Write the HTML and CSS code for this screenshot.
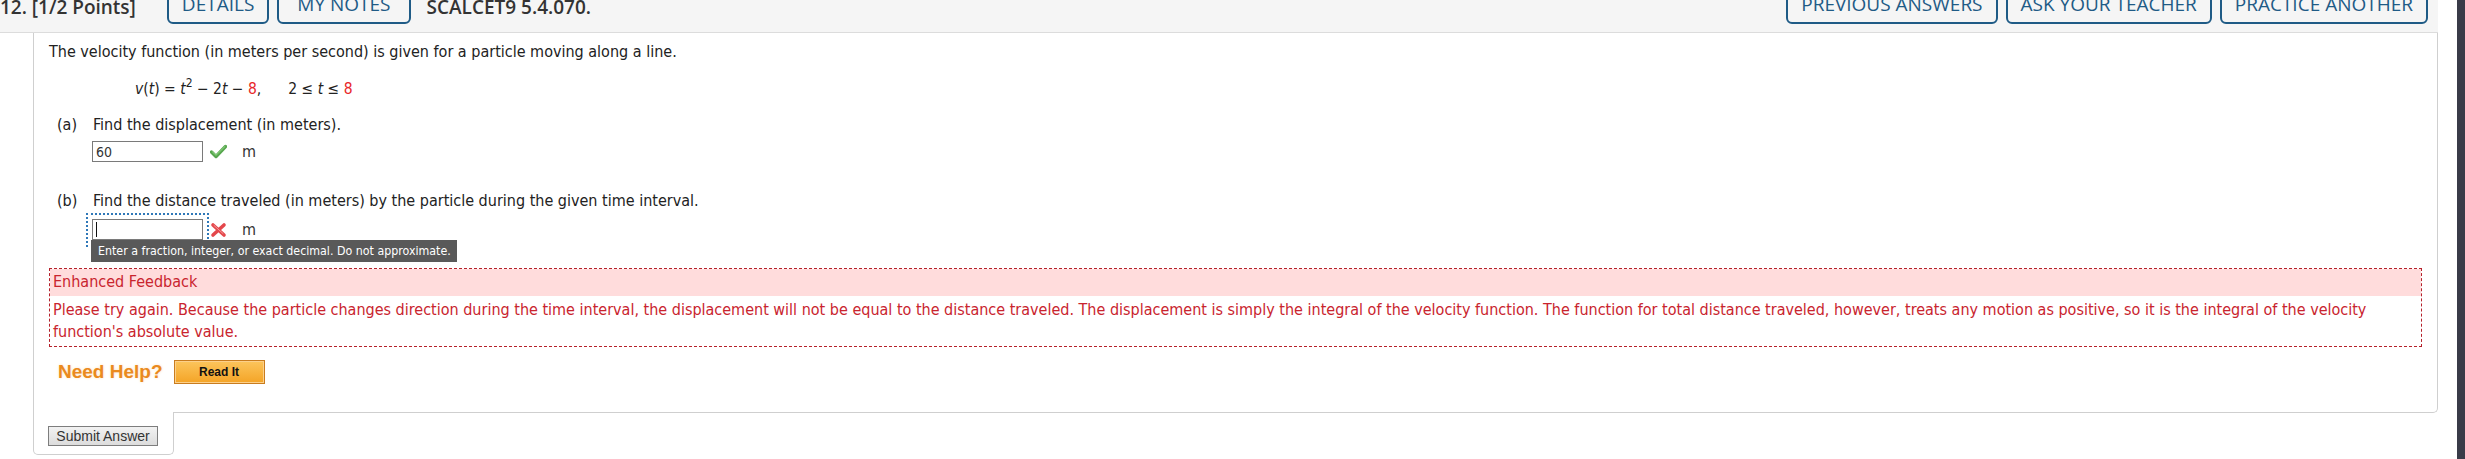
FILE: index.html
```html
<!DOCTYPE html>
<html lang="en">
<head>
  <meta charset="UTF-8" />
  <title>SCALCET9 5.4.070.</title>
  <link rel="stylesheet" href="styles.css">
</head>
<body>

  <div class="screen">
    <div class="page">

      <div class="q-header">
        <span class="q-num">12. [1/2 Points]</span>
        <a class="hbtn">DETAILS</a>
        <a class="hbtn notes">MY NOTES</a>
        <span class="q-code">SCALCET9 5.4.070.</span>
        <span class="spacer"></span>
        <a class="hbtn">PREVIOUS ANSWERS</a>
        <a class="hbtn">ASK YOUR TEACHER</a>
        <a class="hbtn">PRACTICE ANOTHER</a>
      </div>

      <div class="q-body">
        <p class="intro">The velocity function (in meters per second) is given for a particle moving along a line.</p>
        <p class="eq"><i>v</i>(<i>t</i>) = <i>t</i><sup>2</sup> &minus; 2<i>t</i> &minus; <span class="red">8</span>,<span class="sp"></span>2 &le; <i>t</i> &le; <span class="red">8</span></p>

        <div class="part">
          <p class="part-q"><span class="label">(a)</span>Find the displacement (in meters).</p>
          <div class="answer">
            <span class="box"><input class="field" type="text" value="60"></span>
            <svg class="mark" width="17" height="15" viewBox="0 0 17 15">
              <path d="M1.5 8 L6 12.5 L15.5 2.5" fill="none" stroke="#57a64e" stroke-width="3.4" stroke-linecap="round" stroke-linejoin="round"/>
              <path d="M2.5 8 L6 11.3 L15 2.5" fill="none" stroke="#92d886" stroke-width="1" stroke-linecap="round"/>
            </svg>
            <span class="unit">m</span>
          </div>
        </div>

        <div class="part part-b">
          <p class="part-q"><span class="label">(b)</span>Find the distance traveled (in meters) by the particle during the given time interval.</p>
          <div class="answer">
            <span class="box focus"><input class="field" type="text" value=""><span class="caret"></span></span>
            <svg class="mark" width="17" height="16" viewBox="0 0 17 16">
              <path d="M3 3 L14 13 M14 3 L3 13" fill="none" stroke="#e4474b" stroke-width="3.6" stroke-linecap="round"/>
              <path d="M4 3.5 L13 11.5" fill="none" stroke="#f39a9a" stroke-width="1" stroke-linecap="round"/>
            </svg>
            <span class="unit">m</span>
            <div class="tip">Enter a fraction, integer, or exact decimal. Do not approximate.</div>
          </div>
        </div>

        <div class="feedback">
          <div class="fb-head">Enhanced Feedback</div>
          <div class="fb-body">Please try again. Because the particle changes direction during the time interval, the displacement will not be equal to the distance traveled. The displacement is simply the integral of the velocity function. The function for total distance traveled, however, treats any motion as positive, so it is the integral of the velocity function's absolute value.</div>
        </div>

        <div class="help">
          <span class="help-text">Need Help?</span>
          <button class="read-it">Read It</button>
        </div>
      </div>

      <div class="submit-tab">
        <button class="submit">Submit Answer</button>
      </div>

    </div>
    <div class="scrollbar"></div>
  </div>

</body>
</html>
```

FILE: styles.css
```css
* {
  margin: 0;
  padding: 0;
  box-sizing: border-box;
}
body {
  background: #fff;
  font-family: "DejaVu Sans Condensed", "DejaVu Sans", sans-serif;
  font-size: 16px;
  color: #222;
  height: 459px;
  overflow: hidden;
}
.screen {
  display: flex;
  height: 459px;
}
.page {
  flex: 1;
  padding-right: 19px;
}
.scrollbar {
  width: 8px;
  background: #393b48;
}

/* header strip, scrolled so its top is cut */
.q-header {
  height: 33px;
  background: #f5f5f5;
  border-bottom: 1px solid #dcdcdc;
  display: flex;
  align-items: flex-end;
  padding-bottom: 8px;
  overflow: hidden;
  font-family: "Open Sans", sans-serif;
  font-size: 19px;
  font-weight: 600;
  color: #333;
}
.q-num {
  line-height: 20px;
  margin-bottom: 7px;
  margin-right: 31px;
  white-space: nowrap;
}
.q-code {
  line-height: 20px;
  margin-bottom: 7px;
  margin-left: 8px;
  white-space: nowrap;
}
.spacer {
  flex: 1;
}
.hbtn {
  height: 44px;
  line-height: 44px;
  padding: 0 13px;
  border: 2px solid #1f5b86;
  border-radius: 6px;
  color: #1f5b86;
  font-size: 19px;
  font-weight: 400;
  margin-right: 8px;
  white-space: nowrap;
}
.hbtn.notes {
  padding: 0 18px;
}
.hbtn:last-child {
  margin-right: 10px;
}

/* question panel */
.q-body {
  margin-left: 33px;
  border-left: 1px solid #cfcfcf;
  border-right: 1px solid #cfcfcf;
  border-bottom: 1px solid #cfcfcf;
  border-bottom-right-radius: 5px;
  padding: 9px 15px 28px 15px;
  line-height: 20px;
}
.intro {
  margin-bottom: 17px;
}
.eq {
  padding-left: 86px;
  margin-bottom: 16px;
  font-size: 15.5px;
}
.eq sup {
  font-size: 12px;
  line-height: 0;
  position: relative;
  top: -1px;
}
.red {
  color: #e8262a;
}
.sp {
  display: inline-block;
  width: 27px;
}
.label {
  display: inline-block;
  width: 44px;
  padding-left: 8px;
}
.part-q {
  margin-bottom: 6px;
}
.answer {
  position: relative;
  display: flex;
  align-items: center;
  padding-left: 43px;
  height: 21px;
}
.box {
  display: inline-block;
  position: relative;
}
.field {
  display: block;
  width: 111px;
  height: 21px;
  border: 1px solid #7a7a7a;
  font-family: inherit;
  font-size: 14px;
  color: #333;
  padding: 0 3px;
  outline: none;
}
.mark {
  margin-left: 7px;
}
.unit {
  margin-left: 15px;
  color: #333;
}
.part-b {
  margin-top: 29px;
}
.part-b .part-q {
  margin-bottom: 8px;
}
.focus::before {
  content: "";
  position: absolute;
  left: -6px;
  top: -6px;
  right: -6px;
  bottom: -7px;
  border: 2px dotted #2f78b8;
}
.caret {
  position: absolute;
  left: 4px;
  top: 3px;
  width: 1px;
  height: 15px;
  background: #111;
}
.tip {
  position: absolute;
  left: 42px;
  top: 21px;
  width: 366px;
  height: 22px;
  background: #595959;
  color: #fff;
  font-size: 12.3px;
  line-height: 22px;
  padding-left: 7px;
  white-space: nowrap;
}

/* feedback box */
.feedback {
  margin-top: 28px;
  border: 1px dashed #b5212b;
  color: #c9242e;
}
.fb-head {
  background: #ffdcdc;
  height: 27px;
  line-height: 25px;
  padding-left: 3px;
}
.fb-body {
  padding: 3px 8px 3px 3px;
  line-height: 22px;
}

.help {
  display: flex;
  align-items: center;
  margin-top: 13px;
  padding-left: 9px;
}
.help-text {
  font-family: "Liberation Sans", Arial, sans-serif;
  font-weight: bold;
  font-size: 19px;
  color: #ea8a1e;
  text-shadow: 0 0 3px #fbe2c0;
}
.read-it {
  margin-left: 11px;
  width: 91px;
  height: 24px;
  border: 1px solid #c97c1e;
  box-shadow: inset 0 0 0 1px #fcd08a;
  background: linear-gradient(#fcc55c, #f4a426);
  font-family: "Liberation Sans", Arial, sans-serif;
  font-weight: bold;
  font-size: 12px;
  color: #111;
}

/* submit tab hangs below the panel */
.submit-tab {
  margin-left: 33px;
  margin-top: -1px;
  width: 141px;
  height: 43px;
  background: #fff;
  border-left: 1px solid #cfcfcf;
  border-right: 1px solid #cfcfcf;
  border-bottom: 1px solid #cfcfcf;
  border-radius: 0 0 5px 5px;
  padding: 14px 0 0 14px;
  position: relative;
}
.submit {
  width: 110px;
  height: 20px;
  border: 1px solid #7d7d7d;
  background: linear-gradient(#f2f2f2, #dcdcdc);
  font-family: "Liberation Sans", Arial, sans-serif;
  font-size: 14px;
  color: #333;
}
```
